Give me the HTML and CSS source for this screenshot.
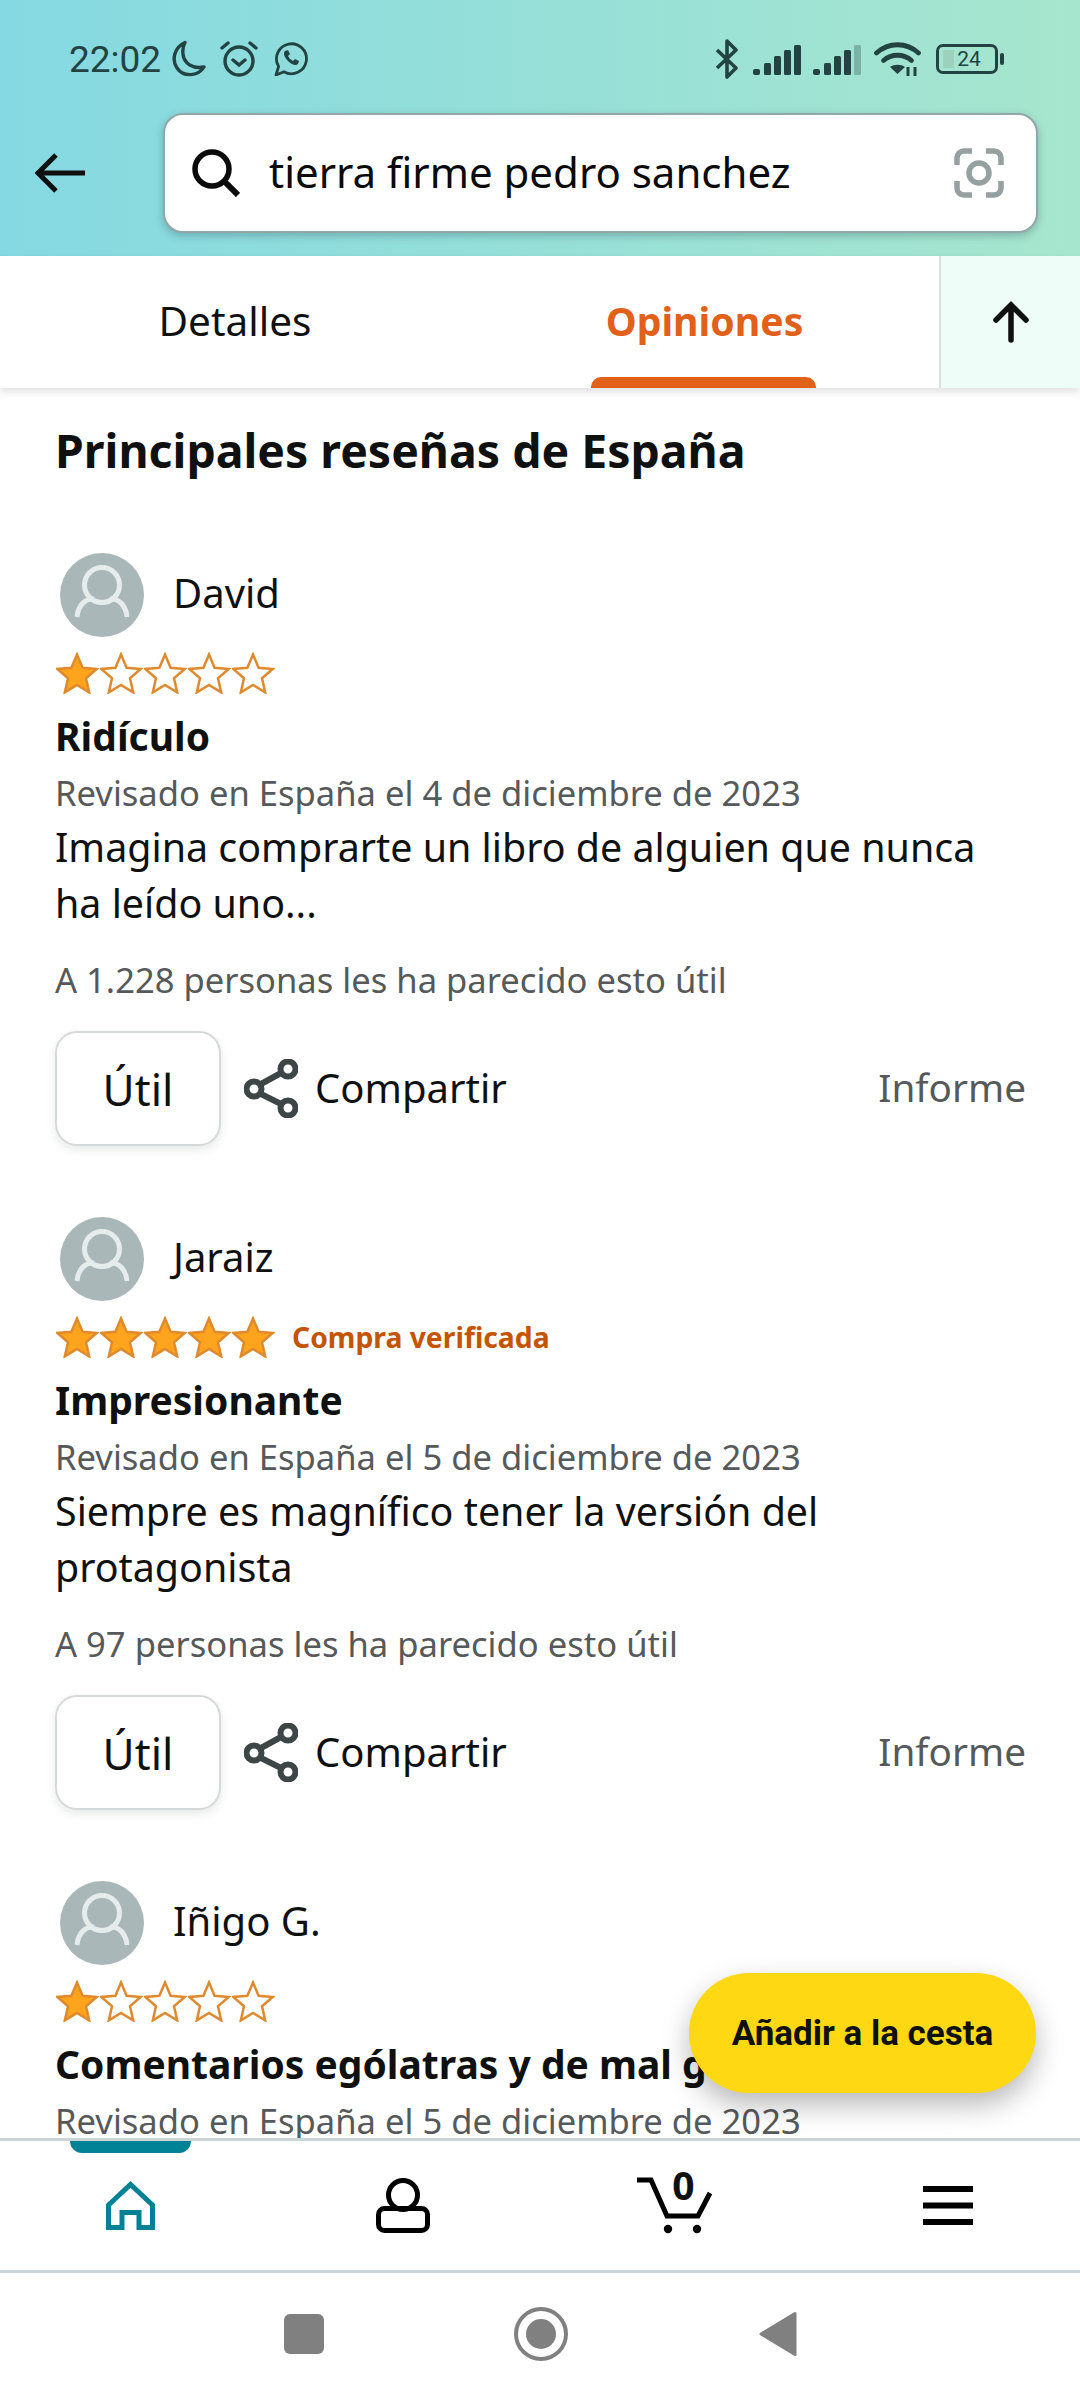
FILE: index.html
```html
<!DOCTYPE html>
<html lang="es">
<head>
    <meta charset="UTF-8">
    <title>Opiniones</title>
    <link rel="stylesheet" href="styles.css">
</head>
<body>
    <svg class="defs" width="0" height="0">
        <defs>
            <symbol id="star" viewBox="0 0 44 42">
                <path d="M21 2.500l5.600 13.200 14.100 1.200-10.700 9.400 3.200 14.100L21 32.900 8.800 40.400 12 26.300 1.300 16.900l14.100-1.200z"/>
            </symbol>
            <symbol id="avatar" viewBox="0 0 84 84">
                <circle cx="42" cy="42" r="42" fill="#a9b7b8"/>
                <circle cx="42" cy="32" r="17.500" fill="none" stroke="#e6ebec" stroke-width="5"/>
                <path d="M17 64c1-12 9-19 17-18M67 64c-1-12-9-19-17-18" fill="none" stroke="#e6ebec" stroke-width="5"/>
            </symbol>
            <symbol id="share" viewBox="0 0 54 59">
                <g fill="none" stroke="#3c4646" stroke-width="6">
                    <circle cx="44" cy="10" r="7.500"/>
                    <circle cx="44" cy="49" r="7.500"/>
                    <circle cx="10" cy="30" r="7.500"/>
                    <path d="M17 25l20-11M17 35l20 10"/>
                </g>
            </symbol>
        </defs>
    </svg>

    <header class="top">
        <div class="status">
            <div class="status-left">
                <span class="clock">22:02</span>
                <svg class="st-moon" viewBox="0 0 36 38"><path d="M15 2.500C5 7 1 19 7 28c6 9 21 9 27-1-11 2-20-3-21-13-.5-4 0-8 2-11.500z" fill="none" stroke="#234343" stroke-width="3.400" stroke-linejoin="round"/></svg>
                <svg class="st-alarm" viewBox="0 0 40 36"><g fill="none" stroke="#234343" stroke-width="3.400" stroke-linecap="round"><circle cx="20" cy="20" r="14"/><path d="M3 7l6-5M37 7l-6-5M14 19l6 5 6-5"/></g></svg>
                <svg class="st-wa" viewBox="0 0 34 34"><path d="M2 33l2.600-8.500A15 15 0 1 1 10 29.800z" fill="none" stroke="#234343" stroke-width="2.800" stroke-linejoin="round"/><path d="M11 9c-2 2-1 6 3 10s8 5 10 3l1-3-4-2-2 2c-2-1-4-3-5-5l2-2-2-4z" fill="#234343"/></svg>
            </div>
            <div class="status-right">
                <svg class="st-bt" viewBox="0 0 24 40"><path d="M2 11l19 18-9 9V2l9 9L2 29" fill="none" stroke="#234343" stroke-width="3.600" stroke-linejoin="round"/></svg>
                <svg class="st-signal" viewBox="0 0 48 30"><g fill="#234343"><rect x="0" y="24" width="7" height="6" rx="2"/><rect x="11" y="18" width="7" height="12" rx="1.500"/><rect x="21" y="11" width="7" height="19" rx="1.500"/><rect x="31" y="5" width="7" height="25" rx="1.500"/><rect x="41" y="0" width="7" height="30" rx="1.500"/></g></svg>
                <svg class="st-signal" viewBox="0 0 48 30"><g fill="#234343"><rect x="0" y="24" width="7" height="6" rx="2"/><rect x="11" y="18" width="7" height="12" rx="1.500"/><rect x="21" y="11" width="7" height="19" rx="1.500"/><rect x="31" y="5" width="7" height="25" rx="1.500"/><rect x="41" y="0" width="7" height="30" rx="1.500" opacity=".3"/></g></svg>
                <svg class="st-wifi" viewBox="0 0 47 36"><g fill="none" stroke="#234343" stroke-width="4.800" stroke-linecap="round"><path d="M2.500 12c12-11 30-11 42 0"/><path d="M9.500 19.500c8-7 20-7 28 0"/></g><path d="M16 26c4-3 11-3 15 0l-7.500 7z" fill="#234343"/><path d="M34 26v9M41 26v9" stroke="#234343" stroke-width="3"/></svg>
                <div class="battery"><span class="battery-fill"></span><span class="battery-num">24</span></div>
            </div>
        </div>
        <div class="searchbar">
            <svg class="back" viewBox="0 0 52 40"><path d="M50 20H3M21 2L3 20l18 18" fill="none" stroke="#0f1111" stroke-width="5"/></svg>
            <div class="search">
                <svg class="loupe" viewBox="0 0 48 48"><circle cx="20" cy="20" r="17" fill="none" stroke="#0a0a0a" stroke-width="5.500"/><path d="M32 32l14 14" stroke="#0a0a0a" stroke-width="6"/></svg>
                <span class="query">tierra firme pedro sanchez</span>
                <svg class="lens" viewBox="0 0 50 50"><g fill="none" stroke="#95a1a1" stroke-width="5.500"><path d="M3 17V10a7 7 0 0 1 7-7h8M32 3h8a7 7 0 0 1 7 7v7M47 33v7a7 7 0 0 1-7 7h-8M18 47h-8a7 7 0 0 1-7-7v-7"/><circle cx="25" cy="25" r="10"/></g></svg>
            </div>
        </div>
    </header>

    <nav class="tabs">
        <div class="tab">Detalles</div>
        <div class="tab tab-on">Opiniones</div>
        <div class="tab-up"><svg viewBox="0 0 36 42"><path d="M18 39V4M3 19L18 4l15 15" fill="none" stroke="#0f1111" stroke-width="5.500" stroke-linecap="round"/></svg></div>
    </nav>

    <main class="feed">
        <h2 class="feed-title">Principales reseñas de España</h2>

        <article class="review">
            <div class="who"><svg class="avatar"><use href="#avatar"/></svg><span>David</span></div>
            <div class="rating">
                <svg class="star on"><use href="#star"/></svg><svg class="star"><use href="#star"/></svg><svg class="star"><use href="#star"/></svg><svg class="star"><use href="#star"/></svg><svg class="star"><use href="#star"/></svg>
            </div>
            <h3 class="r-title">Ridículo</h3>
            <p class="r-date">Revisado en España el 4 de diciembre de 2023</p>
            <p class="r-body">Imagina comprarte un libro de alguien que nunca ha leído uno...</p>
            <p class="r-help">A 1.228 personas les ha parecido esto útil</p>
            <div class="actions">
                <button class="useful">Útil</button>
                <svg class="share"><use href="#share"/></svg>
                <span class="share-label">Compartir</span>
                <span class="report">Informe</span>
            </div>
        </article>

        <article class="review">
            <div class="who"><svg class="avatar"><use href="#avatar"/></svg><span>Jaraiz</span></div>
            <div class="rating">
                <svg class="star on"><use href="#star"/></svg><svg class="star on"><use href="#star"/></svg><svg class="star on"><use href="#star"/></svg><svg class="star on"><use href="#star"/></svg><svg class="star on"><use href="#star"/></svg>
                <span class="verified">Compra verificada</span>
            </div>
            <h3 class="r-title">Impresionante</h3>
            <p class="r-date">Revisado en España el 5 de diciembre de 2023</p>
            <p class="r-body">Siempre es magnífico tener la versión del protagonista</p>
            <p class="r-help">A 97 personas les ha parecido esto útil</p>
            <div class="actions">
                <button class="useful">Útil</button>
                <svg class="share"><use href="#share"/></svg>
                <span class="share-label">Compartir</span>
                <span class="report">Informe</span>
            </div>
        </article>

        <article class="review">
            <div class="who"><svg class="avatar"><use href="#avatar"/></svg><span>Iñigo G.</span></div>
            <div class="rating">
                <svg class="star on"><use href="#star"/></svg><svg class="star"><use href="#star"/></svg><svg class="star"><use href="#star"/></svg><svg class="star"><use href="#star"/></svg><svg class="star"><use href="#star"/></svg>
            </div>
            <h3 class="r-title">Comentarios ególatras y de mal gusto</h3>
            <p class="r-date">Revisado en España el 5 de diciembre de 2023</p>
        </article>

        <button class="add-cart">Añadir a la cesta</button>
    </main>

    <nav class="bottom">
        <span class="bottom-mark"></span>
        <div class="bottom-item"><svg class="ic-home" viewBox="0 0 49 49"><path d="M2.500 46.500V24L24.500 3.500 46.500 24v22.500H33V31.500H16v15z" fill="none" stroke="#008296" stroke-width="5"/></svg></div>
        <div class="bottom-item"><svg class="ic-user" viewBox="0 0 54 55"><g fill="none" stroke="#000" stroke-width="5"><circle cx="27" cy="17" r="14.500"/><rect x="2.500" y="30.500" width="49" height="22" rx="6"/></g></svg></div>
        <div class="bottom-item">
            <div class="cart">
                <svg viewBox="0 0 78 62"><path d="M1 5h14l16 36h31l12-23" fill="none" stroke="#000" stroke-width="5"/><circle cx="32" cy="54" r="4.200"/><circle cx="61" cy="54" r="4.200"/></svg>
                <span class="cart-num">0</span>
            </div>
        </div>
        <div class="bottom-item"><svg class="ic-menu" viewBox="0 0 50 39"><path d="M0 3h50M0 19.500h50M0 36h50" stroke="#000" stroke-width="6"/></svg></div>
    </nav>

    <div class="sysnav">
        <span class="sys-square"></span>
        <span class="sys-circle"><span></span></span>
        <svg class="sys-back" viewBox="0 0 38 46"><path d="M36 2.500v41L2 23z" fill="#808080" stroke="#808080" stroke-width="3" stroke-linejoin="round"/></svg>
    </div>
</body>
</html>
```

FILE: styles.css
```css
/* Reset */
* { margin: 0; padding: 0; box-sizing: border-box; }

html, body {
    width: 1080px;
    height: 2400px;
    overflow: hidden;
}

body {
    font-family: "Noto Sans", Arial, sans-serif;
    background: #fff;
    color: #0f1111;
    display: flex;
    flex-direction: column;
}

.defs { position: absolute; }

/* Header */
.top {
    height: 256px;
    flex: none;
    background: linear-gradient(90deg, #85d9e2, #a7e6ce);
}

.status {
    height: 113px;
    padding: 39px 82px 0 69px;
    display: flex;
    justify-content: space-between;
}

.status-left, .status-right {
    height: 40px;
    display: flex;
    align-items: center;
}

.clock {
    font-family: Roboto, sans-serif;
    font-size: 37px;
    color: #234343;
    width: 101px;
}

.st-moon { width: 36px; height: 38px; margin-right: 13px; }
.st-alarm { width: 40px; height: 36px; margin-right: 15px; }
.st-wa { width: 34px; height: 34px; }
.st-bt { width: 24px; height: 40px; margin-right: 14px; }
.st-signal { width: 48px; height: 30px; margin-right: 12px; margin-top: 1px; }
.st-wifi { width: 47px; height: 36px; margin-left: 1px; margin-right: 15px; }

.battery {
    position: relative;
    width: 62px;
    height: 30px;
    border: 3px solid #234343;
    border-radius: 7px;
    font-family: Roboto, sans-serif;
    font-size: 21px;
    line-height: 24px;
    color: #234343;
    text-align: center;
}

.battery::after {
    content: "";
    position: absolute;
    right: -9px;
    top: 6px;
    width: 4px;
    height: 12px;
    background: #234343;
    border-radius: 2px;
}

.battery-fill {
    position: absolute;
    left: 4px;
    top: 3px;
    width: 11px;
    height: 18px;
    background: #9cd1bd;
}

.battery-num { position: relative; margin-left: 4px; }

.searchbar {
    display: flex;
    align-items: center;
    padding: 0 42px 0 35px;
    height: 120px;
}

.back { width: 52px; height: 40px; margin-right: 76px; flex: none; }

.search {
    flex: 1;
    height: 120px;
    display: flex;
    align-items: center;
    background: #fff;
    border: 2px solid #93a6a8;
    border-radius: 20px;
    box-shadow: 0 3px 8px rgba(40, 70, 75, 0.3);
    padding: 0 32px 0 27px;
}

.loupe { width: 48px; height: 48px; flex: none; margin-right: 29px; }

.query {
    font-size: 42px;
    line-height: 50px;
    color: #0a0a0a;
    flex: 1;
    margin-top: -2px;
}

.lens { width: 50px; height: 50px; flex: none; }

/* Tabs */
.tabs {
    height: 132px;
    flex: none;
    display: flex;
    position: relative;
    z-index: 2;
    background: #fff;
    box-shadow: 0 4px 8px rgba(0, 0, 0, 0.12);
}

.tab {
    width: 470px;
    font-size: 40.500px;
    line-height: 130px;
    text-align: center;
}

.tab-on {
    position: relative;
    color: #e1601a;
    font-weight: 700;
    font-size: 39.200px;
    width: 469px;
}

.tab-on::after {
    content: "";
    position: absolute;
    left: 121px;
    bottom: 0;
    width: 225px;
    height: 11px;
    background: #e1601a;
    border-radius: 10px 10px 0 0;
}

.tab-up {
    flex: 1;
    background: #effdf8;
    border-left: 2px solid #dcdfdf;
    display: flex;
    align-items: center;
    justify-content: center;
}

.tab-up svg { width: 36px; height: 42px; }

/* Reviews */
.feed {
    flex: 1;
    min-height: 0;
    overflow: hidden;
    position: relative;
    padding: 0 56px 0 55px;
}

.feed-title {
    font-size: 46.400px;
    line-height: 60px;
    font-weight: 700;
    margin-top: 32px;
    margin-bottom: 72px;
}

.review {
    height: 664px;
}

.who {
    display: flex;
    align-items: center;
    font-size: 40px;
    height: 84px;
    padding-left: 5px;
}

.who span { margin-top: -3px; }

.avatar { width: 84px; height: 84px; margin-right: 29px; margin-top: 2px; }

.rating {
    display: flex;
    align-items: center;
    height: 44px;
    margin-top: 15px;
    padding-left: 1px;
}

.star {
    width: 44px;
    height: 42px;
    flex: none;
    fill: #fff;
    stroke: #e08a2f;
    stroke-width: 2.500;
}

.star.on { fill: #ffa41c; }

.verified {
    font-size: 28.300px;
    font-weight: 700;
    color: #c45500;
    margin-left: 16px;
}

.r-title {
    font-size: 39px;
    line-height: 50px;
    font-weight: 700;
    margin-top: 16px;
}

.r-date {
    font-size: 34.600px;
    line-height: 46px;
    color: #565959;
    margin-top: 9px;
}

.r-body {
    font-size: 39.400px;
    line-height: 56px;
    margin-top: 3px;
    width: 950px;
}

.r-help {
    font-size: 34.600px;
    line-height: 46px;
    color: #565959;
    margin-top: 26px;
}

.actions {
    display: flex;
    align-items: center;
    margin-top: 28px;
    height: 115px;
}

.useful {
    width: 166px;
    height: 115px;
    background: #fff;
    border: 2px solid #d5d9d9;
    border-radius: 22px;
    box-shadow: 0 4px 10px rgba(20, 40, 40, 0.1);
    font-family: inherit;
    font-size: 44px;
    color: #0f1111;
}

.share { width: 54px; height: 59px; margin-left: 23px; margin-right: 17px; }

.share-label { font-size: 40px; margin-top: -2px; }

.report {
    font-size: 38.700px;
    color: #565959;
    margin-left: auto;
    margin-right: -2px;
    margin-top: -3px;
}

.add-cart {
    position: absolute;
    left: 689px;
    top: 1585px;
    width: 347px;
    height: 120px;
    border: none;
    border-radius: 60px;
    background: #ffd814;
    box-shadow: 0 12px 28px rgba(0, 0, 0, 0.28);
    font-family: Roboto, sans-serif;
    font-size: 35px;
    font-weight: 700;
    color: #0f1111;
}

/* Bottom bar */
.bottom {
    height: 135px;
    flex: none;
    display: flex;
    gap: 12.670px;
    position: relative;
    background: #fff;
    border-top: 3px solid #ccd5d6;
    border-bottom: 3px solid #ccd5d6;
}

.bottom-mark {
    position: absolute;
    left: 70px;
    top: 0;
    width: 121px;
    height: 12px;
    background: #008296;
    border-radius: 0 0 12px 12px;
}

.bottom-item {
    width: 260px;
    display: flex;
    align-items: center;
    justify-content: center;
}

.ic-home { width: 49px; height: 49px; }
.ic-user { width: 54px; height: 55px; }
.ic-menu { width: 50px; height: 39px; }

.cart { position: relative; width: 78px; height: 62px; }
.cart svg { width: 78px; height: 62px; }

.cart-num {
    position: absolute;
    left: 36px;
    top: -17px;
    font-size: 39px;
    font-weight: 700;
}

/* System nav */
.sysnav {
    height: 127px;
    flex: none;
    display: flex;
    align-items: center;
    justify-content: center;
    padding-bottom: 5px;
}

.sys-square {
    width: 40px;
    height: 40px;
    background: #808080;
    border-radius: 6px;
    margin-right: 190px;
}

.sys-circle {
    width: 54px;
    height: 54px;
    border: 4px solid #808080;
    border-radius: 50%;
    display: flex;
    align-items: center;
    justify-content: center;
    margin-right: 191px;
}

.sys-circle span {
    width: 30px;
    height: 30px;
    border-radius: 50%;
    background: #808080;
}

.sys-back { width: 38px; height: 46px; }
```
